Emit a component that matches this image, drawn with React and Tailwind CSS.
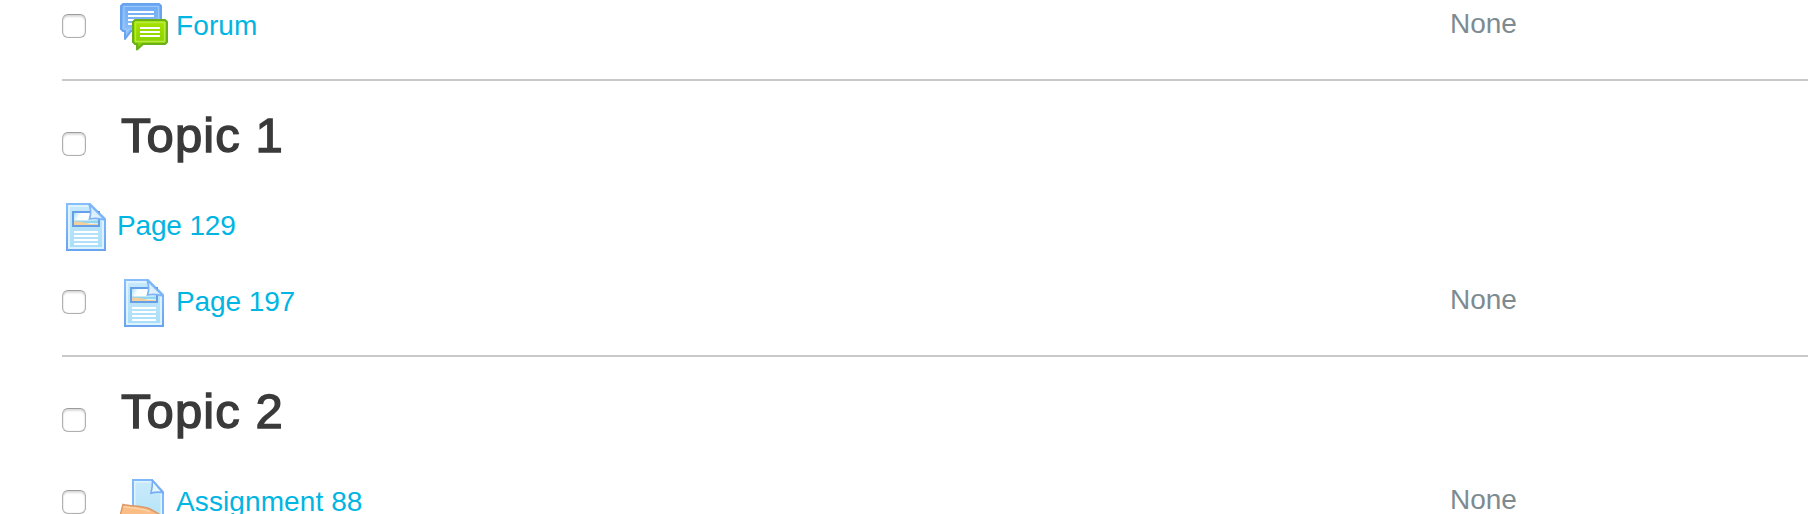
const ForumIcon = () => (
  <svg className="block h-12 w-12" viewBox="0 0 48 48">
    <defs>
      <linearGradient id="blueBubble" x1="0" y1="0" x2="0" y2="1">
        <stop offset="0" stopColor="#6eabf4" />
        <stop offset="1" stopColor="#90c2fa" />
      </linearGradient>
      <linearGradient id="greenBubble" x1="0" y1="0" x2="0" y2="1">
        <stop offset="0" stopColor="#a8e400" />
        <stop offset="1" stopColor="#80cc00" />
      </linearGradient>
    </defs>
    <path
      d="M3 1H39L41 3V26L39 28H11L5 36V28H3L1 26V3Z"
      fill="url(#blueBubble)"
      stroke="#68a3f0"
      strokeWidth="2"
      strokeLinejoin="round"
    />
    <path d="M4 3.5H38.5V26H9L6.5 29V26H4Z" fill="none" stroke="#9ac8fc" strokeWidth="1.2" />
    <path d="M8 9H34M8 13H34M8 17H34M8 21H34" stroke="#fff" strokeWidth="2" />
    <path
      d="M15 17H45L47 19V39L45 41H23L17 46.5V41H15L13 39V19Z"
      fill="url(#greenBubble)"
      stroke="#6ab01a"
      strokeWidth="2"
      strokeLinejoin="round"
    />
    <path d="M15.5 19.5H44.5V38.5H15.5Z" fill="none" stroke="#b9ea42" strokeWidth="1.3" />
    <path d="M20 25H40M20 29H40M20 33H40" stroke="#fff" strokeWidth="2" />
  </svg>
);

const PageIcon = () => (
  <svg className="block h-12 w-12" viewBox="0 0 48 48">
    <defs>
      <linearGradient id="pageEdge" x1="0" y1="0" x2="0" y2="1">
        <stop offset="0" stopColor="#86bdfa" />
        <stop offset="1" stopColor="#6ba5f0" />
      </linearGradient>
      <linearGradient id="pageFill" x1="0" y1="0" x2="0" y2="1">
        <stop offset="0" stopColor="#c6e8fb" />
        <stop offset="1" stopColor="#aadff9" />
      </linearGradient>
      <linearGradient id="pageSky" x1="0" y1="0" x2="1" y2="0.3">
        <stop offset="0" stopColor="#9adcf8" />
        <stop offset="0.3" stopColor="#fafeff" />
        <stop offset="0.7" stopColor="#ffffff" />
        <stop offset="1" stopColor="#d4effb" />
      </linearGradient>
      <linearGradient id="pageFold" x1="0" y1="1" x2="1" y2="0">
        <stop offset="0" stopColor="#f4fbff" />
        <stop offset="1" stopColor="#b2daf9" />
      </linearGradient>
    </defs>
    <path d="M5 1H28L43 16V47H5Z" fill="#dff3fe" stroke="url(#pageEdge)" strokeWidth="2" />
    <path d="M8 4H28L40 17V44H8Z" fill="url(#pageFill)" />
    <path d="M11 9H37V23H11Z" fill="url(#pageSky)" stroke="#659fe8" strokeWidth="2" />
    <path d="M12 17.5H36V20H12Z" fill="#8fd6ee" />
    <path d="M12 18.5L20 19L29 21H36V22H12Z" fill="#f3cf9d" />
    <path d="M27 1Q30 9 27.5 16Q35 14.5 43 17Z" fill="url(#pageFold)" stroke="#7cb4f7" strokeWidth="1.7" />
    <path d="M12 29H36M12 33H36M12 37H36M12 41H36" stroke="#fff" strokeWidth="2" />
  </svg>
);

const AssignmentIcon = () => (
  <svg className="block h-12 w-12" viewBox="0 0 48 48">
    <defs>
      <linearGradient id="sheetFill" x1="0" y1="0" x2="0" y2="1">
        <stop offset="0" stopColor="#c9eafa" />
        <stop offset="1" stopColor="#b2e3f8" />
      </linearGradient>
    </defs>
    <path d="M13 1H32L43 13V47H13Z" fill="#e0f4fe" stroke="#80b8f8" strokeWidth="2" />
    <path d="M15.5 3.5H31L40.5 14V45H15.5Z" fill="url(#sheetFill)" />
    <path d="M32.5 1.5Q32.5 8 31 14.2Q36 12.5 42.5 13.5Z" fill="#e7f7ff" stroke="#76adf5" strokeWidth="1.6" />
    <path
      d="M3 25.5C12 27.5 22 27 30 30L39 35L43 42L36 47H1L0.5 35Z"
      fill="#f9bd85"
      stroke="#dc9866"
      strokeWidth="1.5"
    />
    <path d="M3.5 27.8C14 29 22 29 30 33" fill="none" stroke="#ffd3a7" strokeWidth="1.5" />
  </svg>
);

const Checkbox = ({ className }) => (
  <input
    type="checkbox"
    className={`h-6 w-6 shrink-0 appearance-none rounded-[6px] border border-[#b0b0b0] border-t-[#9c9c9c] bg-white shadow-[inset_0_0_1px_#b8b8b8,inset_0_2px_2px_#dedede] ${className}`}
  />
);

const TopicHeading = ({ title }) => (
  <div className="flex h-[112px] items-start">
    <Checkbox className="mt-[51px]" />
    <h2 className="mt-[24px] ml-[35px] text-[49px] leading-[60px] font-normal tracking-[1.1px] text-[#3a3a3a] [-webkit-text-stroke:1.4px_#3a3a3a]">
      {title}
    </h2>
  </div>
);

const App = () => {
  return (
    <div className="h-[514px] overflow-hidden bg-white pl-[62px] font-['Liberation_Sans',Arial,sans-serif] text-[28px] leading-10 text-[#7d8b91]">
      <div className="flex h-[81px] items-start border-b-2 border-[#c9c9c9]">
        <Checkbox className="mt-[14px]" />
        <div className="mt-[3px] ml-[34px] w-12 shrink-0">
          <ForumIcon />
        </div>
        <a className="mt-[6px] ml-2 w-[1274px] tracking-[0.1px] text-[#00b5e2]">Forum</a>
        <span className="mt-[4px]">None</span>
      </div>

      <div className="h-[276px] border-b-2 border-[#c9c9c9]">
        <TopicHeading title="Topic 1" />
        <div className="flex h-[76px] items-start">
          <div className="mt-[10px] w-12 shrink-0">
            <PageIcon />
          </div>
          <a className="mt-[13px] ml-[7px] tracking-[-0.15px] text-[#00b5e2]">Page 129</a>
        </div>
        <div className="flex items-start">
          <Checkbox className="mt-[21px]" />
          <div className="mt-[10px] ml-[34px] w-12 shrink-0">
            <PageIcon />
          </div>
          <a className="mt-[13px] ml-2 w-[1274px] tracking-[-0.1px] text-[#00b5e2]">Page 197</a>
          <span className="mt-[11px]">None</span>
        </div>
      </div>

      <TopicHeading title="Topic 2" />
      <div className="flex items-start">
        <Checkbox className="mt-[21px]" />
        <div className="mt-[10px] ml-[34px] w-12 shrink-0">
          <AssignmentIcon />
        </div>
        <a className="mt-[13px] ml-2 w-[1274px] tracking-[0.1px] text-[#00b5e2]">Assignment 88</a>
        <span className="mt-[11px]">None</span>
      </div>
    </div>
  );
};

export default App;
